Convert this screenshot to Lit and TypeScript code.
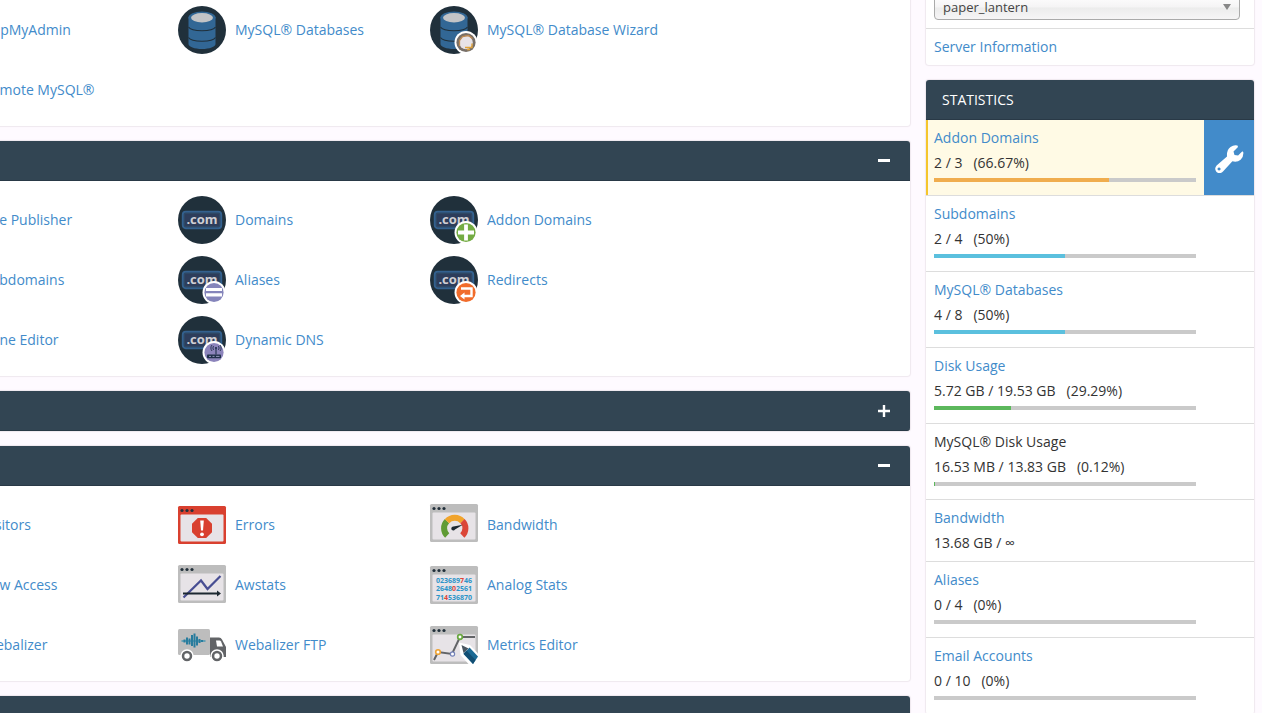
import { LitElement, html, svg, css, nothing } from "lit";
import { customElement, state } from "lit/decorators.js";

const dots = (y: number) => svg`<g fill="#22303b"><circle cx="4" cy=${y} r="1.6"/><circle cx="9" cy=${y} r="1.6"/><circle cx="14" cy=${y} r="1.6"/></g>`;

const frame = (y: number, color = "#bdbdbd") => svg`
  <rect x="0" y=${y} width="48" height="38" rx="1.5" fill=${color}/>
  <rect x="2.5" y=${y + 8.5} width="43" height="27" rx="1" fill="#e7e3e7"/>
  ${dots(y + 4.5)}`;

const database = svg`
  <circle cx="24" cy="24" r="24" fill="#20303b"/>
  <path d="M10.500 11v27c0 2.800 6 5 13.500 5s13.500-2.200 13.500-5V11z" fill="#326795"/>
  <ellipse cx="24" cy="11.500" rx="13.500" ry="6" fill="#326795"/>
  <ellipse cx="24" cy="11.700" rx="11" ry="4.700" fill="#c3c4c6"/>
  <path d="M10.500 21c3 5 24 5 27 0M10.500 31.500c3 5 24 5 27 0" fill="none" stroke="#20303b" stroke-width="1.100"/>`;

const dotCom = svg`
  <circle cx="24" cy="24" r="24" fill="#20303b"/>
  <rect x="4.700" y="15.700" width="38.600" height="16.600" rx="3" fill="#2e4864" stroke="#33618f" stroke-width="1.800"/>
  <rect x="7" y="18" width="34" height="12" rx="1" fill="#2d3d5b"/>
  <text x="24" y="28" text-anchor="middle" font-family="Open Sans, sans-serif" font-weight="700" font-size="13" fill="#cfcfd4">.com</text>`;

const badge = (color: string, mark: unknown) => svg`
  <circle cx="36" cy="36.500" r="11.500" fill="#fff"/>
  <circle cx="36" cy="36.500" r="9.600" fill=${color}/>${mark}`;

const icons: Record<string, unknown> = {
  database,
  databaseWizard: svg`${database}${badge("#776f68", svg`
    <circle cx="36" cy="36.500" r="6.800" fill="#e7e3e7"/>
    <path d="M29.500 40V34.500l3-4 6-1 4 3" fill="none" stroke="#bd8a52" stroke-width="1.300"/>
    <path d="M35 41.500h7v-4M37 43.500h3" fill="none" stroke="#e0a43c" stroke-width="1.400"/>`)}`,
  domain: dotCom,
  addon: svg`${dotCom}${badge("#74ac43", svg`<path d="M36 28.500v16M28 36.500h16" stroke="#fff" stroke-width="3.800"/>`)}`,
  alias: svg`${dotCom}${badge("#8585bb", svg`<path d="M28 33.500h16M28 38.800h16" stroke="#fff" stroke-width="3.200"/>`)}`,
  redirect: svg`${dotCom}${badge("#f16c2b", svg`
    <path d="M31 32.500h10.500v7.500H33.500" fill="none" stroke="#fff" stroke-width="2.400"/>
    <path d="M30 40l4.500-3.500v7z" fill="#fff"/>`)}`,
  dynamic: svg`${dotCom}${badge("#8c84bb", svg`
    <rect x="29" y="38.500" width="14" height="3.800" rx=".8" fill="#20304a"/>
    <path d="M38 38.500v-6" stroke="#20304a" stroke-width="1.100"/>
    <circle cx="38" cy="32" r="1.100" fill="#20304a"/>
    <path d="M35.700 30c-1 1-1 3 0 4M40.300 30c1 1 1 3 0 4M34 29c-1.500 1.700-1.500 4.300 0 6M42 29c1.500 1.700 1.500 4.300 0 6" fill="none" stroke="#20304a" stroke-width=".9"/>
    <path d="M31 40.400h2M34.500 40.400h2M38 40.400h3.500" stroke="#aeb0d8" stroke-width=".8"/>`)}`,
  errors: svg`${frame(5, "#d9402f")}
    <path d="M19.800 17h8.400l5.800 5.800v8.400L28.200 37h-8.400L14 31.200v-8.400z" fill="#d9402f"/>
    <path d="M22.200 19.500h3.600l-.8 10h-2z" fill="#fff"/><circle cx="24" cy="33.300" r="1.900" fill="#fff"/>`,
  bandwidth: svg`${frame(3)}
    <g fill="none" stroke-width="6">
      <path d="M17.200 34.500A10 10 0 0 1 17 20.200" stroke="#609b35"/>
      <path d="M17 20.200a10.300 10.300 0 0 1 15.500 0" stroke="#f1a42c"/>
      <path d="M32.500 20.200A10 10 0 0 1 32.300 34.500" stroke="#db4638"/>
    </g>
    <path d="M32.800 23.800L23.500 25.500a2 2 0 1 0 1.500 3z" fill="#1d2831"/>`,
  awstats: svg`${frame(4)}
    <path d="M5.500 36.500l17.500-17 6.500 8.500 13-13" fill="none" stroke="#484e93" stroke-width="2.200"/>
    <path d="M5 32.500h36" stroke="#1d2831" stroke-width="1.800"/><path d="M39 29.500l4 3-4 3z" fill="#1d2831"/>`,
  analog: svg`${frame(5)}
    <g font-family="Open Sans, sans-serif" font-weight="700" font-size="7" fill="#2b94c8" text-anchor="middle">
      <text x="24" y="21.500">023689<tspan fill="#dd4338">7</tspan>46</text>
      <text x="24" y="30.200">2648<tspan fill="#dd4338">0</tspan>2561</text>
      <text x="24" y="38.800">71<tspan fill="#dd4338">4</tspan>536870</text>
    </g>`,
  truck: svg`
    <rect x="0" y="8" width="32" height="26" rx="1.500" fill="#bdbdbd"/>
    <path d="M32 16.500h9q2 0 3 2l4 7.500v10H32z" fill="#626467"/>
    <path d="M38 19.500h3.500q1 0 1.500 1l2 5h-6z" fill="#fff"/>
    <path d="M3.500 20h24" stroke="#2c8eaf" stroke-width="1.200"/>
    <path d="M6.500 18.500v3M9 16.500v7M11.500 17.500v6M14 14v11M16.500 12.500v14M19 15.500v9M21.500 18v4M24 19v2" stroke="#287c9d" stroke-width="2"/>
    <g fill="#626467" stroke="#fff" stroke-width="1.500"><circle cx="9" cy="35" r="6"/><circle cx="39" cy="35" r="6"/></g>
    <circle cx="9" cy="35" r="2.700" fill="#fff"/><circle cx="39" cy="35" r="2.700" fill="#fff"/>`,
  metrics: svg`${frame(5)}
    <path d="M4 39l4-8 14 2 8-17h15" fill="none" stroke="#626467" stroke-width="2"/>
    <circle cx="8" cy="31" r="2.300" fill="#fff" stroke="#eea333" stroke-width="1.600"/>
    <circle cx="22.500" cy="33" r="2.100" fill="#fff" stroke="#7482b8" stroke-width="1.200"/>
    <circle cx="30" cy="16" r="2.300" fill="#fff" stroke="#69a840" stroke-width="1.700"/>
    <path d="M29 21.500l11 2.500L48 32.500V43h-9.500L30.500 34z" fill="#fff"/>
    <path d="M31.500 24l7 3.500-5 4.500z" fill="#4a5660"/>
    <path d="M39.500 26.500L48 35.500l-5 7.500-9.500-10z" fill="#1b6a95"/><path d="M36.500 29.500l9 9.500-2.500 4-9.500-10.500z" fill="#124e73"/>`,
};

type Section = { name: string; open: boolean; items: [string, string][] };
type Stat = { name: string; value: string; share?: string; percent?: number; tone?: string; plain?: boolean; alert?: boolean };

const stats: Stat[] = [
  { name: "Addon Domains", value: "2 / 3", share: "66.67%", percent: 66.67, tone: "warning", alert: true },
  { name: "Subdomains", value: "2 / 4", share: "50%", percent: 50, tone: "info" },
  { name: "MySQL® Databases", value: "4 / 8", share: "50%", percent: 50, tone: "info" },
  { name: "Disk Usage", value: "5.72 GB / 19.53 GB", share: "29.29%", percent: 29.29, tone: "success" },
  { name: "MySQL® Disk Usage", value: "16.53 MB / 13.83 GB", share: "0.12%", percent: 0.12, tone: "success", plain: true },
  { name: "Bandwidth", value: "13.68 GB / ∞" },
  { name: "Aliases", value: "0 / 4", share: "0%", percent: 0, tone: "success" },
  { name: "Email Accounts", value: "0 / 10", share: "0%", percent: 0, tone: "success" },
];

@customElement("app-root")
export class AppRoot extends LitElement {
  @state() private sections: Section[] = [
    { name: "Databases", open: true, items: [["database", "phpMyAdmin"], ["database", "MySQL® Databases"], ["databaseWizard", "MySQL® Database Wizard"], ["database", "Remote MySQL®"]] },
    { name: "Domains", open: true, items: [["domain", "Site Publisher"], ["domain", "Domains"], ["addon", "Addon Domains"], ["domain", "Subdomains"], ["alias", "Aliases"], ["redirect", "Redirects"], ["domain", "Zone Editor"], ["dynamic", "Dynamic DNS"]] },
    { name: "Email", open: false, items: [] },
    { name: "Metrics", open: true, items: [["awstats", "Visitors"], ["errors", "Errors"], ["bandwidth", "Bandwidth"], ["awstats", "Raw Access"], ["awstats", "Awstats"], ["analog", "Analog Stats"], ["awstats", "Webalizer"], ["truck", "Webalizer FTP"], ["metrics", "Metrics Editor"]] },
    { name: "Security", open: true, items: [] },
  ];

  static styles = css`
    :host { display: block; height: 100vh; overflow: hidden; background: #fefaff; color: #333; font: 14px/20px "Open Sans", sans-serif; }
    * { box-sizing: border-box; }
    a { color: #428bca; text-decoration: none; }
    a:focus-visible { text-decoration: underline; }
    button { border: 0; padding: 0; font: inherit; cursor: pointer; }
    .page { display: flex; align-items: flex-start; gap: 16px; padding-right: 8px; }
    .main { flex: 1; min-width: 0; display: flex; flex-direction: column; gap: 15px; margin: -49px 0 0 -90px; }
    .side { width: 328px; flex: none; display: flex; flex-direction: column; gap: 15px; margin-top: -14px; }
    .panel { background: #fff; border-radius: 3px; box-shadow: 0 0 1px 1px #efe8ef; }
    .head { display: flex; align-items: center; justify-content: flex-end; height: 40px; padding: 0 16px; background: #324553; border-bottom: 1px solid #293946; border-radius: 3px 3px 0 0; color: #fff; }
    .shut { border-radius: 3px; }
    .side .head { justify-content: flex-start; }
    h2 { margin: 0; font-size: 14px; font-weight: 400; }
    .toggle { display: flex; width: 20px; height: 20px; align-items: center; justify-content: center; background: none; color: #fff; }
    .items { display: grid; grid-template-columns: repeat(auto-fill, 252px); grid-auto-rows: 60px; padding: 9px 16px 6px; }
    .item { display: flex; align-items: center; gap: 9px; white-space: nowrap; }
    .icon { flex: none; overflow: visible; }
    .field { position: relative; padding: 8px 14px 8px 8px; border-bottom: 1px solid #ddd; }
    select { display: block; appearance: none; width: 100%; height: 26px; padding: 0 8px; border: 1px solid #aaa; border-radius: 4px; background: linear-gradient(#fff, #f5f4f5 50%, #ececec 54%, #f6f5f6); color: #444; font: 13px/24px "Open Sans", sans-serif; }
    .arrow { position: absolute; right: 23px; top: 18px; pointer-events: none; }
    .info { padding: 8px; }
    .stat { display: flex; border-bottom: 1px solid #ddd; }
    .details { flex: 1; padding: 5px 8px 6px; line-height: 25px; }
    .alert { background: #fffae5; }
    .alert .details { padding-left: 6px; border-left: 2px solid #f5c52c; }
    .fix { width: 50px; background: #428bca; display: flex; align-items: center; justify-content: center; }
    .blank { width: 50px; }
    .share { margin-left: 11px; }
    .bar { height: 4px; margin: 3px 0 7px; background: #cacaca; }
    .fill { height: 4px; }
    .warning { background: #f0ad4e; }
    .info-tone { background: #5bc0de; }
    .success { background: #5cb85c; }
  `;

  private flip(index: number) {
    this.sections = this.sections.map((s, i) => (i === index ? { ...s, open: !s.open } : s));
  }

  private section(s: Section, index: number) {
    return html`<section class="panel">
      <div class="head ${s.open ? "" : "shut"}">
        <button class="toggle" aria-label=${s.name} aria-expanded=${s.open} @click=${() => this.flip(index)}>
          <svg width="12" height="12" viewBox="0 0 12 12" stroke="#fff"><path d=${s.open ? "M0 5.500h12" : "M0 6h12M6 0v12"} stroke-width=${s.open ? 3 : 2.4}/></svg>
        </button>
      </div>
      ${s.open ? html`<div class="items">${s.items.map(([icon, label]) => html`
        <a class="item" href="#"><svg class="icon" width="48" height="48" viewBox="0 0 48 48" aria-hidden="true">${icons[icon]}</svg><span>${label}</span></a>`)}</div>` : nothing}
    </section>`;
  }

  private stat(s: Stat) {
    const tone = s.tone === "info" ? "info-tone" : s.tone;
    return html`<div class="stat ${s.alert ? "alert" : ""}">
      <div class="details">
        <div>${s.plain ? s.name : html`<a href="#">${s.name}</a>`}</div>
        <div>${s.value}${s.share ? html`<span class="share">(${s.share})</span>` : nothing}</div>
        ${s.percent === undefined ? nothing : html`<div class="bar"><div class="fill ${tone}" style="width:${s.percent}%"></div></div>`}
      </div>
      ${s.alert ? html`<button class="fix" aria-label="Fix">
        <svg width="30" height="30" viewBox="0 0 30 30"><path d="M2.600 22.500L13 13.500Q12.500 7 16.500 4q3.500-2.600 7-1.500l.5 1.500-4.500 4.500 1 3.400 3.600.6 4.300-4.200 1 1.200q.2 4.500-2.800 7.200-3.400 2.900-8.200 1.600L9 28.500q-3.500 3.200-6.500.5-2.700-3.300.1-6.500zM5 24.500a1.500 1.500 0 1 0 .1 0z" fill="#fff" fill-rule="evenodd"/></svg>
      </button>` : html`<div class="blank"></div>`}
    </div>`;
  }

  render() {
    return html`<div class="page">
      <main class="main">${this.sections.map((s, i) => this.section(s, i))}</main>
      <aside class="side">
        <section class="panel">
          <div class="field">
            <select aria-label="Theme"><option>paper_lantern</option></select>
            <svg class="arrow" width="8" height="7" viewBox="0 0 8 7"><path d="M0 0h8L4 6z" fill="#888"/></svg>
          </div>
          <div class="info"><a href="#">Server Information</a></div>
        </section>
        <section class="panel">
          <div class="head"><h2>STATISTICS</h2></div>
          ${stats.map((s) => this.stat(s))}
        </section>
      </aside>
    </div>`;
  }
}
